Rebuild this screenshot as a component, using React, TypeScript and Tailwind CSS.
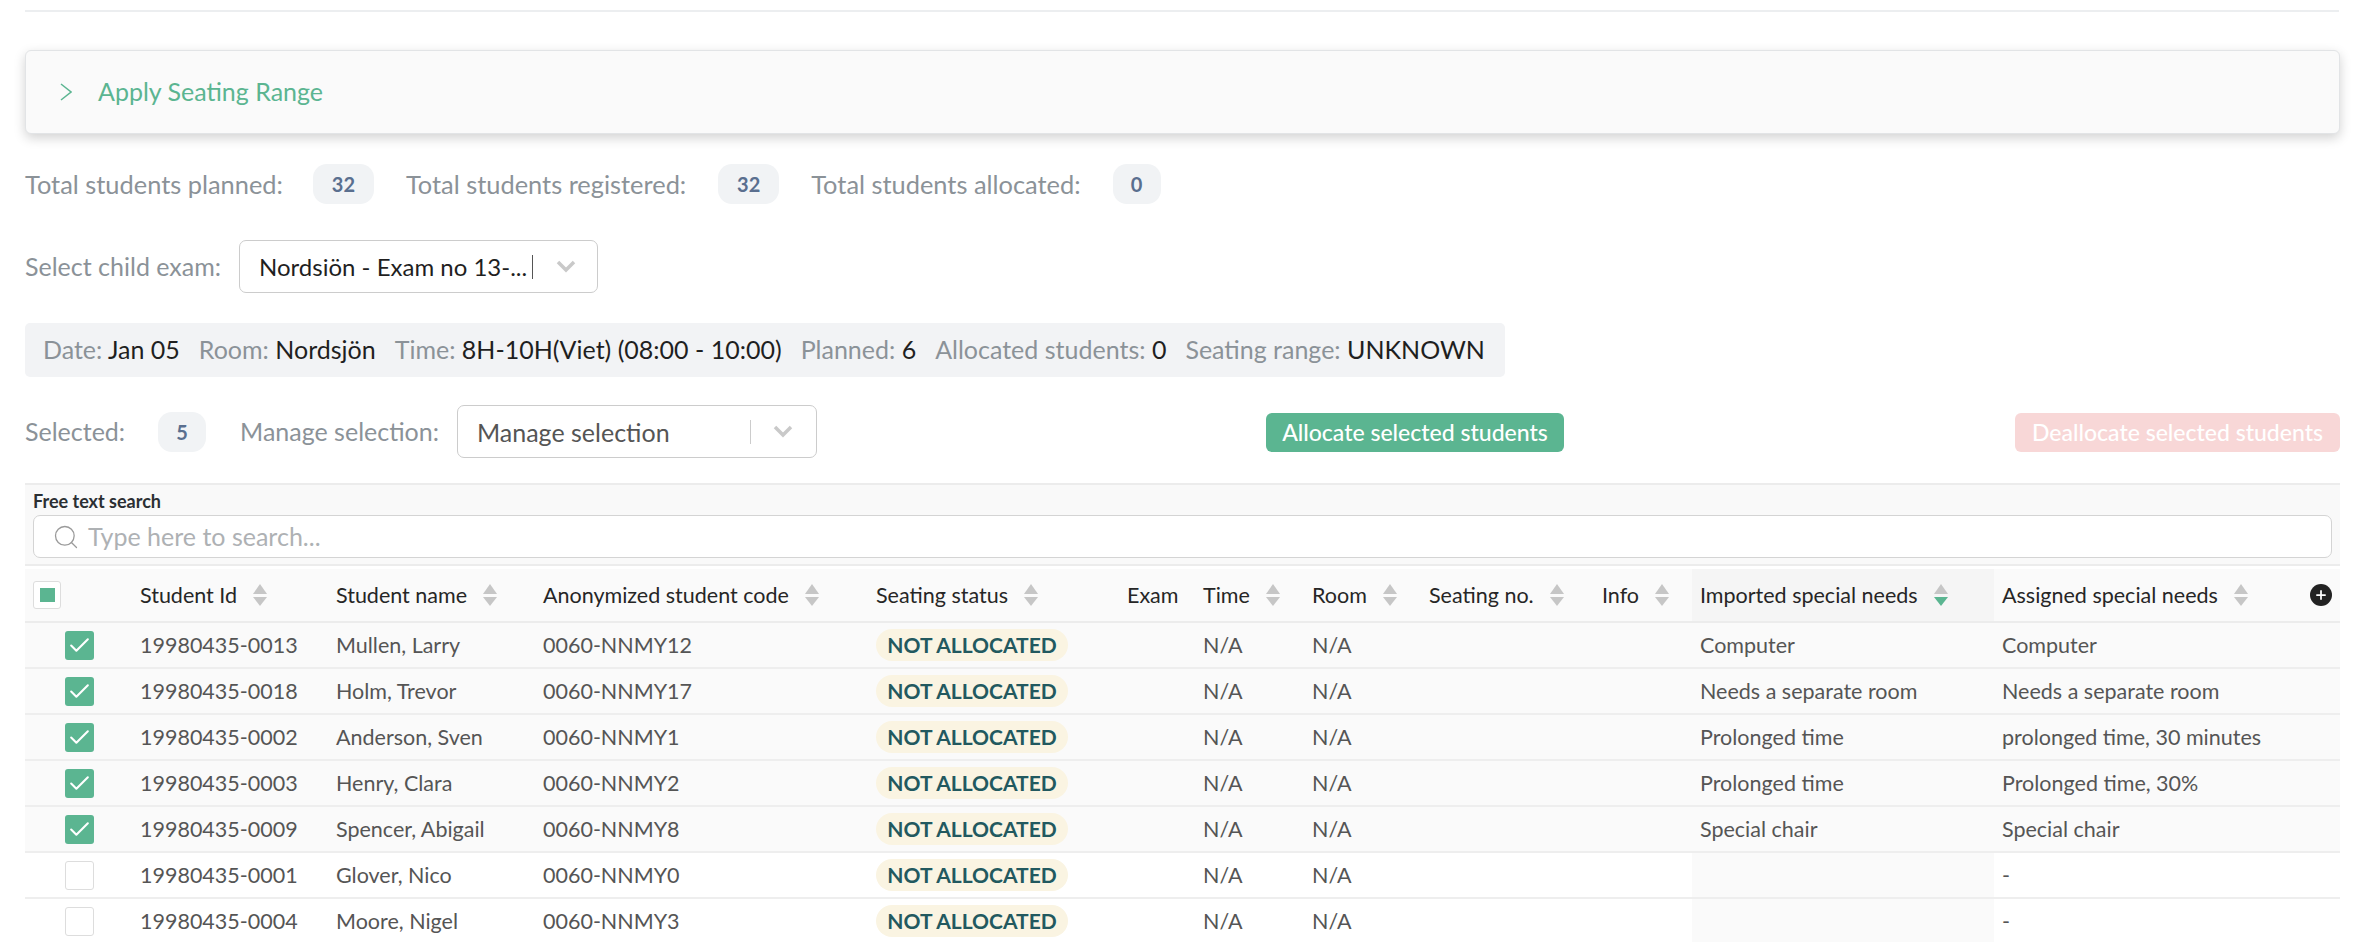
import { Search, Check, Plus } from 'lucide-react';

const rows = [
  { id: '19980435-0013', name: 'Mullen, Larry', code: '0060-NNMY12', imported: 'Computer', assigned: 'Computer', on: true },
  { id: '19980435-0018', name: 'Holm, Trevor', code: '0060-NNMY17', imported: 'Needs a separate room', assigned: 'Needs a separate room', on: true },
  { id: '19980435-0002', name: 'Anderson, Sven', code: '0060-NNMY1', imported: 'Prolonged time', assigned: 'prolonged time, 30 minutes', on: true },
  { id: '19980435-0003', name: 'Henry, Clara', code: '0060-NNMY2', imported: 'Prolonged time', assigned: 'Prolonged time, 30%', on: true },
  { id: '19980435-0009', name: 'Spencer, Abigail', code: '0060-NNMY8', imported: 'Special chair', assigned: 'Special chair', on: true },
  { id: '19980435-0001', name: 'Glover, Nico', code: '0060-NNMY0', imported: '', assigned: '-', on: false },
  { id: '19980435-0004', name: 'Moore, Nigel', code: '0060-NNMY3', imported: '', assigned: '-', on: false },
];

function Sort({ active }: { active?: boolean }) {
  return (
    <svg width="14" height="22" viewBox="0 0 14 22" className="shrink-0">
      <path d="M7 0 L14 10 H0 Z" fill="#c6c6c6" />
      <path d="M0 13 H14 L7 22 Z" fill={active ? '#5bb591' : '#c6c6c6'} />
    </svg>
  );
}

function SelectArrow() {
  return (
    <svg width="20" height="13" viewBox="0 0 20 13" className="shrink-0">
      <path d="M2 2 L10 10 L18 2" fill="none" stroke="#c9c9c9" strokeWidth="3.5" />
    </svg>
  );
}

function Head({ label, sort = true, active, width, bg = '' }: { label: string; sort?: boolean; active?: boolean; width: string; bg?: string }) {
  return (
    <th className={`${width} ${bg} p-0 pl-2 text-left font-normal`}>
      <div className="flex items-center gap-[16px]">
        <span className="whitespace-nowrap">{label}</span>
        {sort && <Sort active={active} />}
      </div>
    </th>
  );
}

function Pill({ children, w }: { children: string; w: string }) {
  return (
    <span className={`flex h-[40px] ${w} items-center justify-center rounded-[14px] bg-[#f1f3f5] text-[20px] font-bold text-[#5a6f8f]`}>
      {children}
    </span>
  );
}

export default function App() {
  return (
    <div className="h-screen overflow-hidden bg-white px-[25px] font-['Lato',sans-serif] text-[25px] text-[#8b9298]">
      <div className="h-[12px] border-b-2 border-[#eceef0]" />

      {/* Apply seating range */}
      <div className="mt-[38px] mr-[-1px] flex h-[84px] items-center rounded-[6px] border border-[#e2e4e6] bg-[#fafafa] pl-[34px] shadow-[0_4px_12px_rgba(0,0,0,0.18)]">
        <svg width="12" height="18" viewBox="0 0 12 18" className="shrink-0">
          <path d="M1 1 L11 9 L1 17" fill="none" stroke="#5bb591" strokeWidth="1.5" />
        </svg>
        <span className="ml-[26px] text-[#5bb591]">Apply Seating Range</span>
      </div>

      {/* Totals */}
      <div className="mt-[30px] flex h-[40px] items-center text-[25.4px]">
        <span>Total students planned:</span>
        <span className="ml-[30px]"><Pill w="w-[61px]">32</Pill></span>
        <span className="ml-[32px]">Total students registered:</span>
        <span className="ml-[32px]"><Pill w="w-[61px]">32</Pill></span>
        <span className="ml-[32px]">Total students allocated:</span>
        <span className="ml-[32px]"><Pill w="w-[48px]">0</Pill></span>
      </div>

      {/* Child exam */}
      <div className="mt-[36px] flex h-[53px] items-center">
        <span>Select child exam:</span>
        <div className="ml-[18px] flex h-[53px] w-[359px] items-center rounded-[7px] border border-[#cccccc] pl-[19px] text-[24px] text-[#1f1f1f]">
          <span className="w-[274px] whitespace-nowrap border-r border-[#555555] leading-[24px]">Nordsiön - Exam no 13-...</span>
          <span className="ml-[23px]"><SelectArrow /></span>
        </div>
      </div>

      {/* Exam details */}
      <div className="mt-[30px] flex h-[54px] w-[1480px] items-center gap-[19px] rounded-[5px] bg-[#f2f3f5] pl-[18px]">
        <span>Date: <span className="text-[#1f1f1f]">Jan 05</span></span>
        <span>Room: <span className="text-[#1f1f1f]">Nordsjön</span></span>
        <span>Time: <span className="text-[#1f1f1f]">8H-10H(Viet) (08:00 - 10:00)</span></span>
        <span>Planned: <span className="text-[#1f1f1f]">6</span></span>
        <span>Allocated students: <span className="text-[#1f1f1f]">0</span></span>
        <span>Seating range: <span className="text-[#1f1f1f]">UNKNOWN</span></span>
      </div>

      {/* Selection */}
      <div className="mt-[28px] flex h-[53px] items-center">
        <span>Selected:</span>
        <span className="ml-[33px]"><Pill w="w-[48px]">5</Pill></span>
        <span className="ml-[34px]">Manage selection:</span>
        <div className="ml-[18px] flex h-[53px] w-[360px] items-center rounded-[7px] border border-[#cccccc] pl-[19px] text-[#555555]">
          <span className="w-[273px] pt-[2px]">Manage selection</span>
          <span className="h-[24px] w-px bg-[#cccccc]" />
          <span className="ml-[22px]"><SelectArrow /></span>
        </div>
        <button className="mt-[2px] ml-[449px] h-[39px] w-[298px] rounded-[6px] bg-[#5bb591] text-[23px] font-medium text-white">Allocate selected students</button>
        <button className="mt-[2px] ml-auto mr-[-1px] h-[39px] w-[325px] rounded-[6px] bg-[#f8d7d7] text-[23px] font-medium text-white">Deallocate selected students</button>
      </div>

      {/* Search */}
      <div className="mt-[25px] mr-[-1px] h-[83px] border-y-2 border-[#ececec] bg-[#f9f9f9] px-[8px]">
        <div className="pt-[5px] pb-px text-[18px] font-bold leading-[22px] text-[#2b2f33]">Free text search</div>
        <div className="mt-[2px] flex h-[43px] items-center rounded-[7px] border border-[#d4d4d4] bg-white pl-[18px] text-[#aeb1b4]">
          <Search size={28} strokeWidth={1.1} className="text-[#9a9a9a]" />
          <span className="ml-[8px]">Type here to search...</span>
        </div>
      </div>

      {/* Students */}
      <table className="mt-[3px] mr-[-1px] w-[2315px] table-fixed border-collapse text-[21.5px]">
        <thead>
          <tr className="h-[53px] border-b-2 border-[#ececec] bg-[#fafafa] text-[#262626]">
            <th className="w-[107px] p-0 pl-[8px] text-left">
              <div className="flex h-[28px] w-[28px] items-center justify-center rounded-[3px] border border-[#dddddd] bg-white">
                <div className="h-[14px] w-[15px] bg-[#5bb591]" />
              </div>
            </th>
            <Head width="w-[196px]" label="Student Id" />
            <Head width="w-[207px]" label="Student name" />
            <Head width="w-[333px]" label="Anonymized student code" />
            <Head width="w-[251px]" label="Seating status" />
            <Head width="w-[76px]" label="Exam" sort={false} />
            <Head width="w-[109px]" label="Time" />
            <Head width="w-[117px]" label="Room" />
            <Head width="w-[173px]" label="Seating no." />
            <Head width="w-[98px]" label="Info" />
            <Head width="w-[302px]" label="Imported special needs" active bg="bg-[#f5f5f5]" />
            <th className="relative w-[346px] p-0 pl-2 text-left font-normal">
              <div className="flex items-center gap-[16px]">
                <span>Assigned special needs</span>
                <Sort />
              </div>
              <span className="absolute right-[8px] top-[15px] flex h-[22px] w-[22px] items-center justify-center rounded-full bg-[#222222] text-white">
                <Plus size={14} strokeWidth={3} />
              </span>
            </th>
          </tr>
        </thead>
        <tbody className="text-[#555555]">
          {rows.map((r) => (
            <tr key={r.id} className={`h-[46px] border-b-2 border-[#eeeeee] ${r.on ? 'bg-[#fafafa]' : 'bg-white'}`}>
              <td className="p-0 pl-[40px]">
                {r.on ? (
                  <div className="flex h-[29px] w-[29px] items-center justify-center rounded-[3px] bg-[#5bb591] text-white">
                    <Check size={25} strokeWidth={2} />
                  </div>
                ) : (
                  <div className="h-[29px] w-[29px] rounded-[3px] border border-[#dddddd] bg-white" />
                )}
              </td>
              <td className="p-0 pl-2">{r.id}</td>
              <td className="p-0 pl-2">{r.name}</td>
              <td className="p-0 pl-2">{r.code}</td>
              <td className="p-0 pl-2">
                <span className="inline-flex h-[32px] w-[192px] items-center justify-center rounded-full bg-[#faf4e2] text-[21px] font-bold text-[#22595f]">NOT ALLOCATED</span>
              </td>
              <td className="p-0" />
              <td className="p-0 pl-2">N/A</td>
              <td className="p-0 pl-2">N/A</td>
              <td className="p-0" />
              <td className="p-0" />
              <td className="bg-[#fafafa] p-0 pl-2">{r.imported}</td>
              <td className="p-0 pl-2">{r.assigned}</td>
            </tr>
          ))}
        </tbody>
      </table>
    </div>
  );
}
